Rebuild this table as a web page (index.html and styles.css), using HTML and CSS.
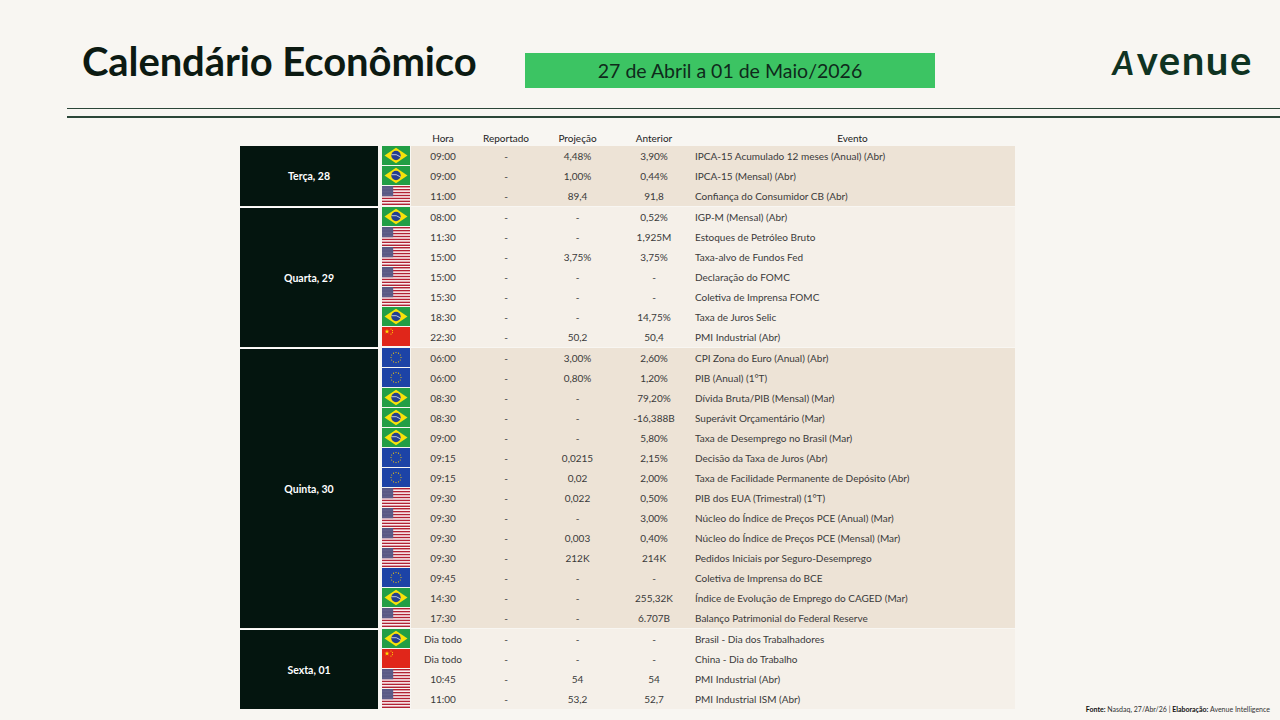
FILE: index.html
```html
<!DOCTYPE html>
<html lang="pt-BR">
<head>
<meta charset="utf-8">
<title>Calendário Econômico</title>
<link rel="stylesheet" href="styles.css">
</head>
<body>
<svg class="defs" width="0" height="0" aria-hidden="true">
  <defs>
    <pattern id="usstars" width="1.6" height="1.45" patternUnits="userSpaceOnUse">
      <rect width="1.6" height="1.45" fill="#3c3b6e"/>
      <circle cx="0.8" cy="0.72" r="0.42" fill="#e8e8f0"/>
    </pattern>
    <symbol id="f-br" viewBox="0 0 28 19">
      <rect width="28" height="19" fill="#229e45"/>
      <polygon points="2.5,9.5 14,1.8 25.5,9.5 14,17.2" fill="#f8e20a"/>
      <circle cx="14" cy="9.5" r="4.7" fill="#243f8f"/>
      <path d="M9.5,8.7 Q14.5,7.6 18.5,10.9" stroke="#fff" stroke-width="0.7" fill="none"/>
    </symbol>
    <symbol id="f-us" viewBox="0 0 28 19">
      <rect width="28" height="19" fill="#fff"/>
      <rect y="0" width="28" height="1.46" fill="#b22234"/>
      <rect y="2.92" width="28" height="1.46" fill="#b22234"/>
      <rect y="5.85" width="28" height="1.46" fill="#b22234"/>
      <rect y="8.77" width="28" height="1.46" fill="#b22234"/>
      <rect y="11.69" width="28" height="1.46" fill="#b22234"/>
      <rect y="14.62" width="28" height="1.46" fill="#b22234"/>
      <rect y="17.54" width="28" height="1.46" fill="#b22234"/>
      <rect width="11.2" height="10.23" fill="url(#usstars)"/>
    </symbol>
    <symbol id="f-cn" viewBox="0 0 28 19">
      <rect width="28" height="19" fill="#e0261a"/>
      <polygon points="5,1.9 5.59,3.69 7.47,3.7 5.95,4.81 6.53,6.6 5,5.5 3.47,6.6 4.05,4.81 2.53,3.7 4.41,3.69" fill="#ffde00"/>
      <circle cx="9" cy="2" r="0.55" fill="#ffde00"/>
      <circle cx="10.5" cy="3.6" r="0.55" fill="#ffde00"/>
      <circle cx="10.5" cy="5.6" r="0.55" fill="#ffde00"/>
      <circle cx="9" cy="7.1" r="0.55" fill="#ffde00"/>
    </symbol>
    <symbol id="f-eu" viewBox="0 0 28 19">
      <rect width="28" height="19" fill="#1d43a6"/>
      <g fill="#ffcc00">
        <circle cx="19" cy="9.5" r="0.55"/><circle cx="18.33" cy="12" r="0.55"/>
        <circle cx="16.5" cy="13.83" r="0.55"/><circle cx="14" cy="14.5" r="0.55"/>
        <circle cx="11.5" cy="13.83" r="0.55"/><circle cx="9.67" cy="12" r="0.55"/>
        <circle cx="9" cy="9.5" r="0.55"/><circle cx="9.67" cy="7" r="0.55"/>
        <circle cx="11.5" cy="5.17" r="0.55"/><circle cx="14" cy="4.5" r="0.55"/>
        <circle cx="16.5" cy="5.17" r="0.55"/><circle cx="18.33" cy="7" r="0.55"/>
      </g>
    </symbol>
  </defs>
</svg>

<header class="header">
  <h1 class="title">Calendário Econômico</h1>
  <div class="period">27 de Abril a 01 de Maio/2026</div>
  <div class="logo"><span class="logo-a">A</span>venue</div>
</header>

<div class="rules">
  <div class="rule rule-thin"></div>
  <div class="rule rule-thick"></div>
</div>

<main class="content">
  <section class="calendar">
    <div class="head">
      <div class="hc">Hora</div>
      <div class="hc">Reportado</div>
      <div class="hc">Projeção</div>
      <div class="hc">Anterior</div>
      <div class="hc">Evento</div>
    </div>

    <div class="group band-dark">
      <div class="day">Terça, 28</div>
      <div class="rows">
        <div class="row"><svg class="flag"><use href="#f-br"/></svg><div class="c">09:00</div><div class="c">-</div><div class="c">4,48%</div><div class="c">3,90%</div><div class="ev">IPCA-15 Acumulado 12 meses (Anual) (Abr)</div></div>
        <div class="row"><svg class="flag"><use href="#f-br"/></svg><div class="c">09:00</div><div class="c">-</div><div class="c">1,00%</div><div class="c">0,44%</div><div class="ev">IPCA-15 (Mensal) (Abr)</div></div>
        <div class="row"><svg class="flag"><use href="#f-us"/></svg><div class="c">11:00</div><div class="c">-</div><div class="c">89,4</div><div class="c">91,8</div><div class="ev">Confiança do Consumidor CB (Abr)</div></div>
      </div>
    </div>

    <div class="group band-light">
      <div class="day">Quarta, 29</div>
      <div class="rows">
        <div class="row"><svg class="flag"><use href="#f-br"/></svg><div class="c">08:00</div><div class="c">-</div><div class="c">-</div><div class="c">0,52%</div><div class="ev">IGP-M (Mensal) (Abr)</div></div>
        <div class="row"><svg class="flag"><use href="#f-us"/></svg><div class="c">11:30</div><div class="c">-</div><div class="c">-</div><div class="c">1,925M</div><div class="ev">Estoques de Petróleo Bruto</div></div>
        <div class="row"><svg class="flag"><use href="#f-us"/></svg><div class="c">15:00</div><div class="c">-</div><div class="c">3,75%</div><div class="c">3,75%</div><div class="ev">Taxa-alvo de Fundos Fed</div></div>
        <div class="row"><svg class="flag"><use href="#f-us"/></svg><div class="c">15:00</div><div class="c">-</div><div class="c">-</div><div class="c">-</div><div class="ev">Declaração do FOMC</div></div>
        <div class="row"><svg class="flag"><use href="#f-us"/></svg><div class="c">15:30</div><div class="c">-</div><div class="c">-</div><div class="c">-</div><div class="ev">Coletiva de Imprensa FOMC</div></div>
        <div class="row"><svg class="flag"><use href="#f-br"/></svg><div class="c">18:30</div><div class="c">-</div><div class="c">-</div><div class="c">14,75%</div><div class="ev">Taxa de Juros Selic</div></div>
        <div class="row"><svg class="flag"><use href="#f-cn"/></svg><div class="c">22:30</div><div class="c">-</div><div class="c">50,2</div><div class="c">50,4</div><div class="ev">PMI Industrial (Abr)</div></div>
      </div>
    </div>

    <div class="group band-dark">
      <div class="day">Quinta, 30</div>
      <div class="rows">
        <div class="row"><svg class="flag"><use href="#f-eu"/></svg><div class="c">06:00</div><div class="c">-</div><div class="c">3,00%</div><div class="c">2,60%</div><div class="ev">CPI Zona do Euro (Anual) (Abr)</div></div>
        <div class="row"><svg class="flag"><use href="#f-eu"/></svg><div class="c">06:00</div><div class="c">-</div><div class="c">0,80%</div><div class="c">1,20%</div><div class="ev">PIB (Anual) (1°T)</div></div>
        <div class="row"><svg class="flag"><use href="#f-br"/></svg><div class="c">08:30</div><div class="c">-</div><div class="c">-</div><div class="c">79,20%</div><div class="ev">Dívida Bruta/PIB (Mensal) (Mar)</div></div>
        <div class="row"><svg class="flag"><use href="#f-br"/></svg><div class="c">08:30</div><div class="c">-</div><div class="c">-</div><div class="c">-16,388B</div><div class="ev">Superávit Orçamentário (Mar)</div></div>
        <div class="row"><svg class="flag"><use href="#f-br"/></svg><div class="c">09:00</div><div class="c">-</div><div class="c">-</div><div class="c">5,80%</div><div class="ev">Taxa de Desemprego no Brasil (Mar)</div></div>
        <div class="row"><svg class="flag"><use href="#f-eu"/></svg><div class="c">09:15</div><div class="c">-</div><div class="c">0,0215</div><div class="c">2,15%</div><div class="ev">Decisão da Taxa de Juros (Abr)</div></div>
        <div class="row"><svg class="flag"><use href="#f-eu"/></svg><div class="c">09:15</div><div class="c">-</div><div class="c">0,02</div><div class="c">2,00%</div><div class="ev">Taxa de Facilidade Permanente de Depósito (Abr)</div></div>
        <div class="row"><svg class="flag"><use href="#f-us"/></svg><div class="c">09:30</div><div class="c">-</div><div class="c">0,022</div><div class="c">0,50%</div><div class="ev">PIB dos EUA (Trimestral) (1°T)</div></div>
        <div class="row"><svg class="flag"><use href="#f-us"/></svg><div class="c">09:30</div><div class="c">-</div><div class="c">-</div><div class="c">3,00%</div><div class="ev">Núcleo do Índice de Preços PCE (Anual) (Mar)</div></div>
        <div class="row"><svg class="flag"><use href="#f-us"/></svg><div class="c">09:30</div><div class="c">-</div><div class="c">0,003</div><div class="c">0,40%</div><div class="ev">Núcleo do Índice de Preços PCE (Mensal) (Mar)</div></div>
        <div class="row"><svg class="flag"><use href="#f-us"/></svg><div class="c">09:30</div><div class="c">-</div><div class="c">212K</div><div class="c">214K</div><div class="ev">Pedidos Iniciais por Seguro-Desemprego</div></div>
        <div class="row"><svg class="flag"><use href="#f-eu"/></svg><div class="c">09:45</div><div class="c">-</div><div class="c">-</div><div class="c">-</div><div class="ev">Coletiva de Imprensa do BCE</div></div>
        <div class="row"><svg class="flag"><use href="#f-br"/></svg><div class="c">14:30</div><div class="c">-</div><div class="c">-</div><div class="c">255,32K</div><div class="ev">Índice de Evolução de Emprego do CAGED (Mar)</div></div>
        <div class="row"><svg class="flag"><use href="#f-us"/></svg><div class="c">17:30</div><div class="c">-</div><div class="c">-</div><div class="c">6.707B</div><div class="ev">Balanço Patrimonial do Federal Reserve</div></div>
      </div>
    </div>

    <div class="group band-light">
      <div class="day">Sexta, 01</div>
      <div class="rows">
        <div class="row"><svg class="flag"><use href="#f-br"/></svg><div class="c">Dia todo</div><div class="c">-</div><div class="c">-</div><div class="c">-</div><div class="ev">Brasil - Dia dos Trabalhadores</div></div>
        <div class="row"><svg class="flag"><use href="#f-cn"/></svg><div class="c">Dia todo</div><div class="c">-</div><div class="c">-</div><div class="c">-</div><div class="ev">China - Dia do Trabalho</div></div>
        <div class="row"><svg class="flag"><use href="#f-us"/></svg><div class="c">10:45</div><div class="c">-</div><div class="c">54</div><div class="c">54</div><div class="ev">PMI Industrial (Abr)</div></div>
        <div class="row"><svg class="flag"><use href="#f-us"/></svg><div class="c">11:00</div><div class="c">-</div><div class="c">53,2</div><div class="c">52,7</div><div class="ev">PMI Industrial ISM (Abr)</div></div>
      </div>
    </div>
  </section>

  <p class="source"><b>Fonte:</b> Nasdaq, 27/Abr/26 | <b>Elaboração:</b> Avenue Intelligence</p>
</main>
</body>
</html>
```

FILE: styles.css
```css
* { box-sizing: border-box; }

html, body {
  margin: 0;
  padding: 0;
}

body {
  width: 1280px;
  height: 720px;
  overflow: hidden;
  background: #f8f6f2;
  font-family: Lato, "Open Sans", "Liberation Sans", sans-serif;
  color: #333;
}

.defs {
  display: block;
  width: 0;
  height: 0;
  overflow: hidden;
}

/* ---------- header ---------- */
.header {
  display: flex;
  align-items: flex-start;
  padding-left: 82px;
  padding-right: 27px;
  height: 104px;
}

.title {
  margin: 39px 0 0 0;
  width: 443px;
  font-size: 40px;
  line-height: 44px;
  font-weight: 700;
  color: #0c1a12;
  letter-spacing: -0.1px;
  white-space: nowrap;
}

.period {
  margin-top: 53px;
  width: 410px;
  height: 35px;
  background: #3cc463;
  color: #0f2a1b;
  font-size: 19.5px;
  line-height: 36px;
  text-align: center;
}

.logo {
  margin-left: auto;
  margin-top: 38px;
  font-size: 40px;
  line-height: 44px;
  font-weight: 700;
  color: #0f3322;
  letter-spacing: 1.6px;
}

.logo-a {
  font-size: 33px;
  font-style: italic;
  margin-right: 1px;
}

/* ---------- rules ---------- */
.rules {
  margin-left: 67px;
}

.rule {
  background: #2b4638;
}

.rule-thin {
  height: 1px;
  margin-top: 4px;
}

.rule-thick {
  height: 2px;
  margin-top: 7px;
}

/* ---------- content ---------- */
.content {
  display: flex;
  align-items: flex-end;
  padding-left: 240px;
  padding-right: 10px;
  margin-top: 12px;
}

.calendar {
  width: 775px;
  font-size: 10px;
}

.head {
  display: grid;
  grid-template-columns: 64px 62px 81px 72px 325px;
  margin-left: 171px;
  height: 16px;
  line-height: 16px;
  color: #222;
}

.hc {
  text-align: center;
}

.group {
  display: flex;
}

.group + .group {
  margin-top: 1px;
}

.group + .group .day {
  border-top: 1px solid #ffffff;
}

.day {
  width: 138px;
  margin-right: 4px;
  background: #04150f;
  color: #fff;
  font-weight: 700;
  font-size: 10.5px;
  display: flex;
  align-items: center;
  justify-content: center;
}

.rows {
  width: 633px;
}

.row {
  display: grid;
  grid-template-columns: 29px 64px 62px 81px 72px 325px;
  height: 20px;
  line-height: 20px;
}

.flag {
  width: 28px;
  height: 19px;
  display: block;
  background: #f8f6f2;
}

.c,
.ev {
  color: #3a3a3a;
  white-space: nowrap;
}

.c {
  text-align: center;
}

.ev {
  padding-left: 5px;
}

.band-dark .c,
.band-dark .ev {
  background: #ede3d6;
}

.band-light .c,
.band-light .ev {
  background: #f5f0e9;
}

/* ---------- footer ---------- */
.source {
  margin: 0 0 -5px auto;
  font-size: 7px;
  line-height: 10px;
  color: #333;
  white-space: nowrap;
}

.source b {
  font-weight: 700;
  color: #111;
}
```
